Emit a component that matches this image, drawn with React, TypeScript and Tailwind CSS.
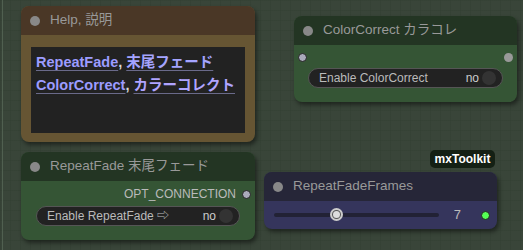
import React from "react";

const font = "font-['Liberation_Sans','Noto_Sans_CJK_JP',sans-serif]";

function Dot({ className = "" }: { className?: string }) {
  return <span className={"block h-[9px] w-[9px] rounded-full " + className} />;
}

function Toggle({ label }: { label: string }) {
  return (
    <div className="flex h-[20px] items-center rounded-full border border-[#555] bg-[#222] pl-[10px] pr-[6px] text-[12px] text-[#bbb]">
      <span className="flex-1 truncate">{label}</span>
      <span className="mr-[3px] text-[#ccc]">no</span>
      <span className="h-[14px] w-[14px] rounded-full bg-[#333]" />
    </div>
  );
}

function Title({ text, bg }: { text: string; bg: string }) {
  return (
    <div className={"flex h-[29px] items-center gap-[10px] rounded-t-[8px] pl-[9px] text-[13.5px] text-[#999] " + bg}>
      <span className="h-[10px] w-[10px] rounded-full bg-[#888]" />
      <span>{text}</span>
    </div>
  );
}

const link = "underline decoration-[#6a6a8a] decoration-1 underline-offset-[3px]";

export default function App() {
  return (
    <div
      className={
        "relative h-[250px] w-[523px] overflow-hidden bg-[#394539] " +
        "bg-[linear-gradient(#33403380_1px,transparent_1px),linear-gradient(90deg,#33403380_1px,transparent_1px)] bg-[size:10px_10px] " +
        font
      }
    >
      <div className="absolute left-[2px] top-0 h-full w-[1px] bg-[#506050]" />

      {/* Help node */}
      <div className="absolute left-[21px] top-[6px] w-[234px] rounded-[8px] bg-[#665533] shadow-[2px_3px_4px_rgba(0,0,0,0.45)]">
        <Title text="Help, 説明" bg="bg-[#4a3726]" />
        <div className="px-[10px] pb-[9px] pt-[12px]">
          <div className="h-[86px] whitespace-nowrap bg-[#222] px-[5px] pt-[4px] text-[14.5px] font-bold leading-[23px] text-[#ddd]">
            <div>
              <span className={"text-[#9c9cff] " + link}>RepeatFade</span>,{" "}
              <span className={"text-[#a4a4ff] " + link}>末尾フェード</span>
            </div>
            <div>
              <span className={"text-[#9c9cff] " + link}>ColorCorrect</span>,{" "}
              <span className={"text-[#b0a4ff] " + link}>カラーコレクト</span>
            </div>
          </div>
        </div>
      </div>

      {/* ColorCorrect node */}
      <div className="absolute left-[294px] top-[16px] w-[223px] rounded-[8px] bg-[#355535] shadow-[2px_3px_4px_rgba(0,0,0,0.45)]">
        <Title text="ColorCorrect カラコレ" bg="bg-[#233523]" />
        <div className="flex flex-col px-[14px] pb-[14px] pt-[7px]">
          <div className="-mx-[10px] flex h-[11px] items-center justify-between">
            <Dot className="border border-[#222] bg-[#aab]" />
            <Dot className="bg-[#999]" />
          </div>
          <div className="mt-[5px]">
            <Toggle label="Enable ColorCorrect" />
          </div>
        </div>
      </div>

      {/* RepeatFade node */}
      <div className="absolute left-[21px] top-[152px] w-[234px] rounded-[8px] bg-[#355535] shadow-[2px_3px_4px_rgba(0,0,0,0.45)]">
        <Title text="RepeatFade 末尾フェード" bg="bg-[#233523]" />
        <div className="flex flex-col px-[15px] pb-[14px] pt-[6px]">
          <div className="-mr-[11px] flex h-[14px] items-center justify-end gap-[6px] text-[12px] text-[#bbb]">
            <span>OPT_CONNECTION</span>
            <Dot className="border border-[#222] bg-[#aab]" />
          </div>
          <div className="mt-[5px]">
            <Toggle label="Enable RepeatFade ⇨" />
          </div>
        </div>
      </div>

      {/* mxToolkit badge */}
      <div className="absolute left-[430px] top-[150px] flex h-[18px] w-[65px] items-center justify-center rounded-[5px] bg-[#142014] text-[12px] font-bold text-white">
        mxToolkit
      </div>

      {/* RepeatFadeFrames node */}
      <div className="absolute left-[264px] top-[172px] w-[233px] rounded-[8px] bg-[#35355c] shadow-[2px_3px_4px_rgba(0,0,0,0.45)]">
        <Title text="RepeatFadeFrames" bg="bg-[#262638]" />
        <div className="flex h-[28px] items-center pl-[10px] pr-[7px]">
          <div className="relative h-[4px] w-[165px] rounded-full bg-[#222235]">
            <span className="absolute left-[56px] top-[-5px] h-[13px] w-[13px] rounded-full border-2 border-[#ccc] bg-[#555] p-[1px]">
              <span className="block h-full w-full rounded-full bg-[#ddd]" />
            </span>
          </div>
          <span className="ml-auto mr-[20px] text-[13px] text-[#bbb]">7</span>
          <Dot className="h-[8px] w-[8px] border border-[#222] bg-[#55ff55]" />
        </div>
      </div>
    </div>
  );
}
